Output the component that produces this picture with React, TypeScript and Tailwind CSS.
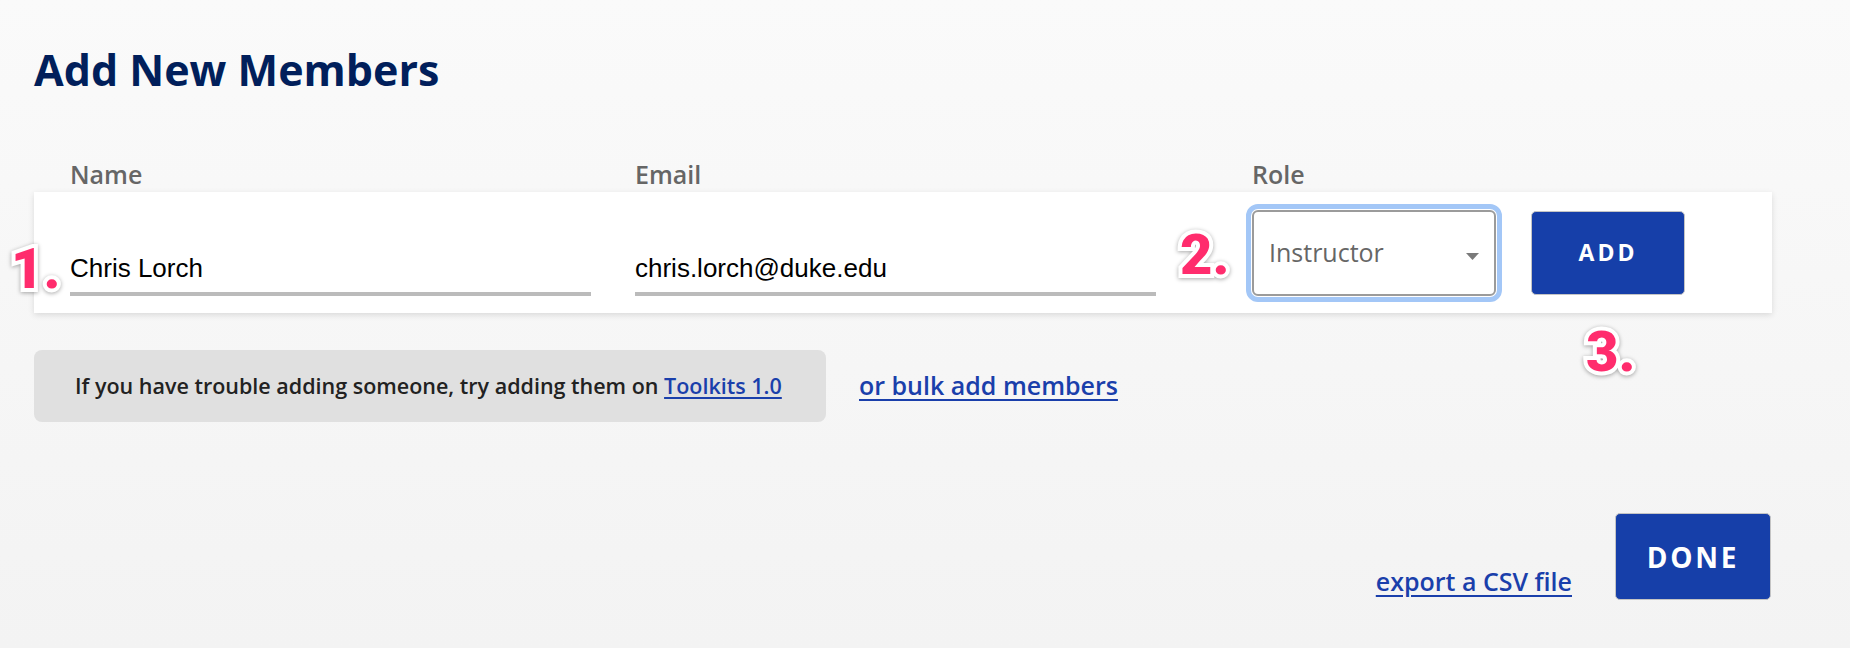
import React from "react";
import clsx from "clsx";

const Step = ({ n, className }: { n: number; className: string }) => (
  <span
    className={clsx(
      "absolute font-['Roboto','Liberation_Sans',sans-serif] font-black text-[56px] leading-none text-[#ff2c6d] [-webkit-text-stroke:8px_white] [paint-order:stroke_fill] drop-shadow-[0_1px_2px_rgba(0,0,0,0.35)] select-none",
      className
    )}
  >
    {n}.
  </span>
);

const UnderlineInput = ({ value }: { value: string }) => (
  <div className="flex h-[86px] w-[521px] flex-col justify-end">
    <input
      readOnly
      value={value}
      className="h-[50px] w-full border-b-4 border-[#bbbbbb] bg-transparent font-['Liberation_Sans',Arial,sans-serif] text-[26px] text-black outline-none"
    />
  </div>
);

export default function App() {
  return (
    <div className="relative min-h-screen bg-gradient-to-b from-[#fafafa] to-[#f3f3f3] pl-[34px] pt-[40px] font-['Open_Sans',sans-serif]">
      <h1 className="text-[43px] font-bold leading-[60px] text-[#011f5b]">Add New Members</h1>

      {/* column labels */}
      <div className="mt-[57px] flex pl-[36px] text-[25px] font-semibold leading-[34px] text-[#666666]">
        <div className="w-[521px]">Name</div>
        <div className="ml-[44px] w-[617px]">Email</div>
        <div>Role</div>
      </div>

      {/* entry row */}
      <div className="mt-[1px] flex h-[121px] w-[1738px] items-center bg-white pl-[36px] shadow-[0_2px_6px_rgba(0,0,0,0.12)]">
        <UnderlineInput value="Chris Lorch" />
        <div className="ml-[44px]">
          <UnderlineInput value="chris.lorch@duke.edu" />
        </div>
        <div className="relative ml-[96px] flex h-[86px] w-[244px] items-center rounded-[6px] border-2 border-[#9b9b9b] pl-[15px] text-[25px] text-[#666666] outline-[5px] outline-offset-[1px] outline-[#a3c7f7] outline-solid">
          Instructor
          <svg className="absolute right-[15px] top-[41px]" width="13" height="7" viewBox="0 0 13 7">
            <path d="M0 0h13L6.5 7z" fill="#7a7a7a" />
          </svg>
        </div>
        <button className="ml-[35px] h-[84px] w-[154px] rounded-[5px] border border-[#c4c4c4] bg-[#163fa9] text-[23px] font-bold tracking-[0.13em] text-white">
          ADD
        </button>
      </div>

      {/* help row */}
      <div className="mt-[37px] flex items-center">
        <div className="flex h-[72px] w-[792px] items-center rounded-[8px] bg-[#e0e0e0] pl-[41px] text-[21.5px] font-semibold text-[#222222]">
          If you have trouble adding someone, try adding them on&nbsp;
          <a href="#" className="text-[#1a3fab] underline underline-offset-[3px]">
            Toolkits 1.0
          </a>
        </div>
        <a href="#" className="ml-[33px] text-[25px] font-semibold text-[#1a3fab] underline underline-offset-[4px]">
          or bulk add members
        </a>
      </div>

      {/* footer */}
      <div className="mt-[91px] flex w-[1737px] items-end justify-end">
        <a href="#" className="mb-[2px] text-[25px] font-semibold leading-[34px] text-[#1a3fab] underline underline-offset-[4px]">
          export a CSV file
        </a>
        <button className="ml-[43px] h-[87px] w-[156px] rounded-[5px] border border-[#c4c4c4] bg-[#163fa9] text-[28px] font-bold tracking-[0.1em] text-white">
          DONE
        </button>
      </div>

      <Step n={1} className="left-[11px] top-[241px]" />
      <Step n={2} className="left-[1180px] top-[227px]" />
      <Step n={3} className="left-[1586px] top-[324px]" />
    </div>
  );
}
